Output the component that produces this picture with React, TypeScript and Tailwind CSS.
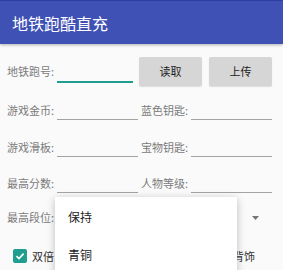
import React from "react";

const font = { fontFamily: '"Noto Sans CJK SC", "Noto Sans", sans-serif' };

function Field({ label }: { label: string }) {
    return (
        <div className="flex items-center">
            <span className="w-[50px] shrink-0 text-[11px] leading-none text-[#7a7a7a]">{label}</span>
            <div className="h-[20px] flex-1 border-b border-[#a3a3a3]"></div>
        </div>
    );
}

function Check({ label }: { label: string }) {
    return (
        <div className="flex items-center">
            <div className="flex h-[14px] w-[14px] items-center justify-center rounded-[2px] bg-[#1f9e8f]">
                <svg width="10" height="10" viewBox="0 0 10 10">
                    <path d="M1.5 5.2 L4 7.6 L8.6 2.6" stroke="white" strokeWidth="1.6" fill="none" />
                </svg>
            </div>
            <span className="ml-[5px] text-[11px] leading-none text-[#333]">{label}</span>
        </div>
    );
}

export default function App() {
    return (
        <div className="relative h-[270px] w-[283px] overflow-hidden bg-[#fafafa]" style={font}>
            <div className="relative z-10 flex h-[44px] items-center border-t border-[#303f9f] bg-[#3f51b5] pl-[12px] shadow-[0_1px_3px_rgba(0,0,0,0.3)]">
                <span className="text-[16px] leading-none text-white">地铁跑酷直充</span>
            </div>

            <div className="pl-[7px] pr-[11px] pt-[8px]">
                <div className="flex h-[39px] items-center">
                    <span className="w-[50px] shrink-0 text-[11px] leading-none text-[#7a7a7a]">地铁跑号:</span>
                    <div className="h-[22px] w-[76px] border-b-2 border-[#1f9e8f]"></div>
                    <button className="ml-[6px] h-[29px] w-[63px] rounded-[2px] bg-[#d6d6d6] text-[11px] text-[#222] shadow-[0_1px_1px_rgba(0,0,0,0.12)]">读取</button>
                    <button className="ml-[7px] h-[29px] w-[63px] rounded-[2px] bg-[#d6d6d6] text-[11px] text-[#222] shadow-[0_1px_1px_rgba(0,0,0,0.12)]">上传</button>
                </div>

                <div className="grid h-[38px] grid-cols-2 items-center gap-x-[3px]">
                    <Field label="游戏金币:" />
                    <Field label="蓝色钥匙:" />
                </div>
                <div className="grid h-[36px] grid-cols-2 items-center gap-x-[3px]">
                    <Field label="游戏滑板:" />
                    <Field label="宝物钥匙:" />
                </div>
                <div className="grid h-[36px] grid-cols-2 items-center gap-x-[3px]">
                    <Field label="最高分数:" />
                    <Field label="人物等级:" />
                </div>

                <div className="flex h-[33px] items-center">
                    <span className="w-[50px] shrink-0 text-[11px] leading-none text-[#7a7a7a]">最高段位:</span>
                    <div className="flex flex-1 justify-end pr-[13px]">
                        <svg width="7" height="4" viewBox="0 0 7 4">
                            <path d="M0 0 L7 0 L3.5 4 Z" fill="#757575" />
                        </svg>
                    </div>
                </div>

                <div className="flex h-[44px] items-center justify-between pl-[6px] pr-[17px]">
                    <Check label="双倍" />
                    <span className="text-[11px] leading-none text-[#333]">背饰</span>
                </div>
            </div>

            <div className="absolute left-[55px] top-[197px] z-20 h-[90px] w-[182px] bg-white pt-[1px] shadow-[0_2px_8px_rgba(0,0,0,0.25)]">
                <div className="flex h-[38px] items-center pl-[13px] text-[12px] text-[#222]">保持</div>
                <div className="flex h-[38px] items-center pl-[13px] text-[12px] text-[#222]">青铜</div>
            </div>
        </div>
    );
}
